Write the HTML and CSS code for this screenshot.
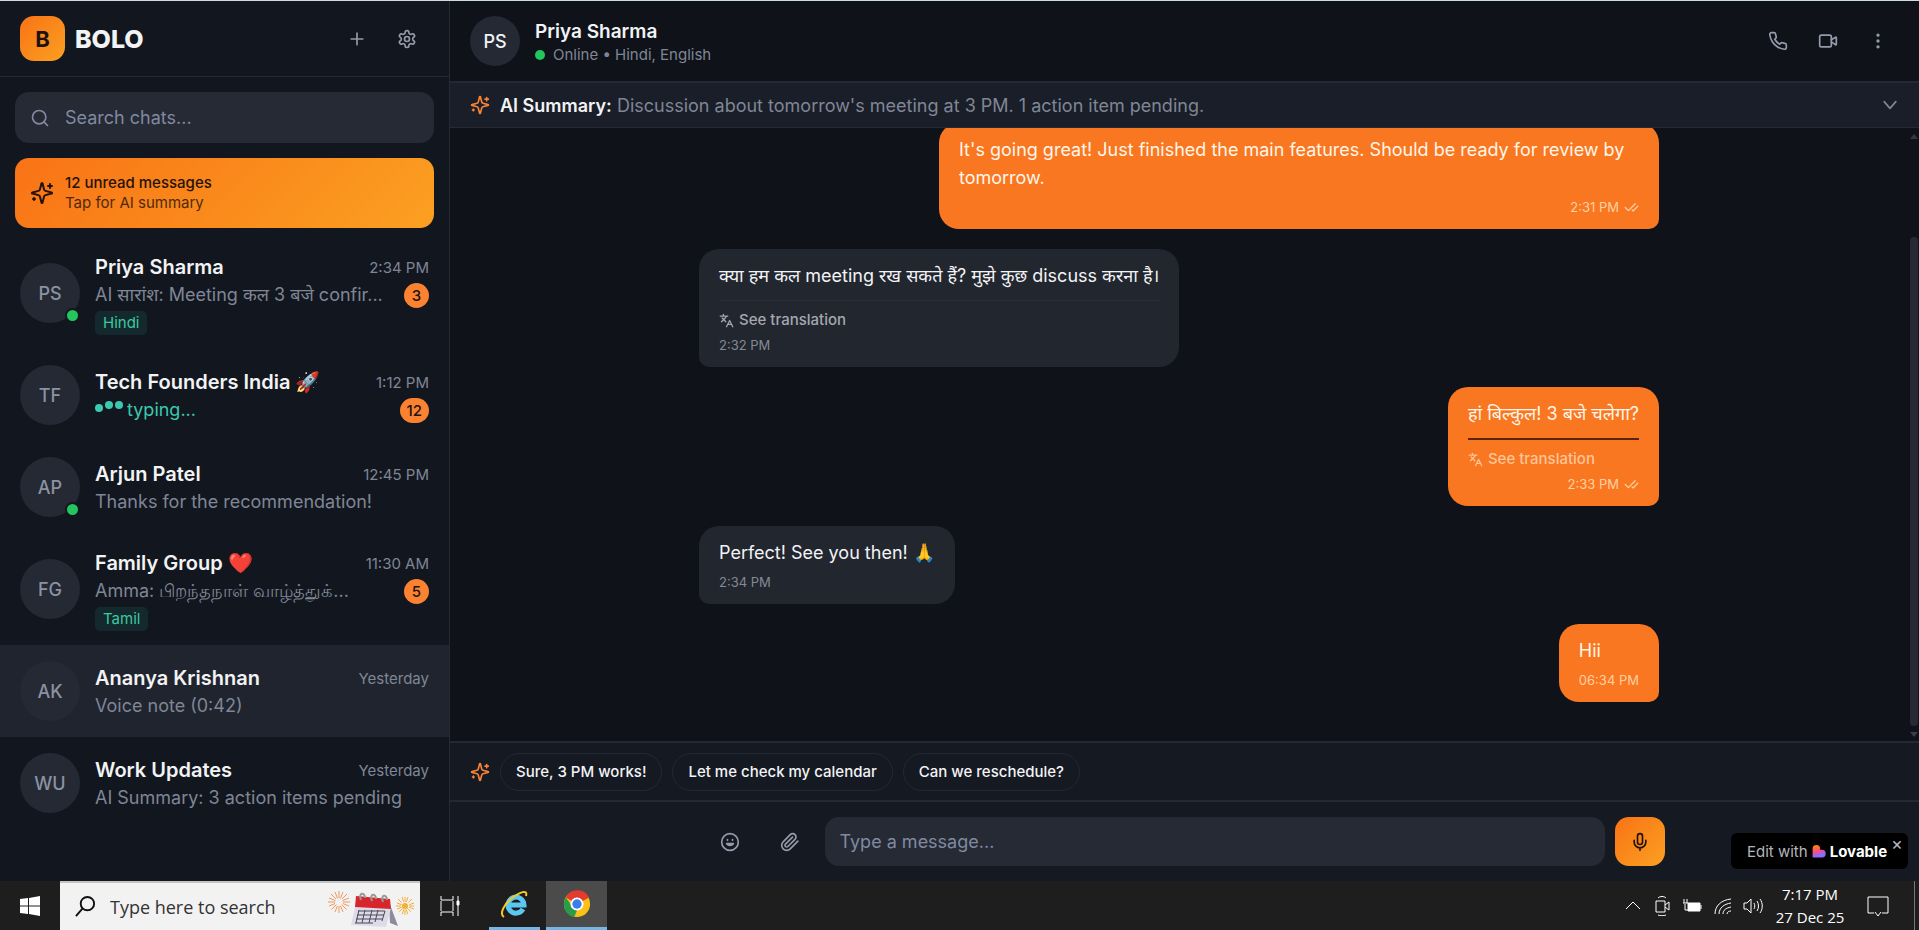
FILE: index.html
```html
<!DOCTYPE html>
<html lang="en">

<head>
    <meta charset="utf-8">
    <title>BOLO</title>
    <link rel="stylesheet" href="styles.css">
</head>

<body>
    <!-- shared icons -->
    <svg class="sprite" aria-hidden="true">
        <symbol id="sparkles" viewBox="0 0 24 24">
            <path d="M9.9 15.5A2 2 0 0 0 8.500 14.100l-6.100-1.600a.5.5 0 0 1 0-1L8.500 9.900A2 2 0 0 0 9.900 8.500l1.600-6.100a.5.5 0 0 1 1 0L14.100 8.500A2 2 0 0 0 15.500 9.900l6.100 1.600a.5.5 0 0 1 0 1L15.500 14.100a2 2 0 0 0-1.400 1.400l-1.600 6.100a.5.5 0 0 1-1 0z" />
            <path d="M20 3v4M22 5h-4M4 17v2M5 18H3" />
        </symbol>
        <symbol id="translate" viewBox="0 0 24 24">
            <path d="M2 5h12M7 2v3M4 14l6-6 2-3M5 8l6 6M22 22l-5-10-5 10M14 18h6" />
        </symbol>
        <symbol id="checks" viewBox="0 0 24 24">
            <path d="M18 6 7 17l-5-5M22 10l-7.500 7.500L13 16" />
        </symbol>
    </svg>

    <div class="app">
        <aside class="sidebar">
            <header class="brand">
                <div class="logo">B</div>
                <h1>BOLO</h1>
                <button class="icon-btn" aria-label="New chat"><svg class="icon" viewBox="0 0 24 24"><path d="M5 12h14M12 5v14" /></svg></button>
                <button class="icon-btn" aria-label="Settings"><svg class="icon" viewBox="0 0 24 24"><path d="M12.220 2h-.44a2 2 0 0 0-2 2v.18a2 2 0 0 1-1 1.730l-.43.25a2 2 0 0 1-2 0l-.15-.08a2 2 0 0 0-2.730.73l-.22.38a2 2 0 0 0 .73 2.730l.15.1a2 2 0 0 1 1 1.720v.51a2 2 0 0 1-1 1.740l-.15.09a2 2 0 0 0-.73 2.730l.22.38a2 2 0 0 0 2.730.73l.15-.08a2 2 0 0 1 2 0l.43.25a2 2 0 0 1 1 1.730V20a2 2 0 0 0 2 2h.44a2 2 0 0 0 2-2v-.18a2 2 0 0 1 1-1.730l.43-.25a2 2 0 0 1 2 0l.15.08a2 2 0 0 0 2.730-.73l.22-.39a2 2 0 0 0-.73-2.730l-.15-.08a2 2 0 0 1-1-1.740v-.5a2 2 0 0 1 1-1.740l.15-.09a2 2 0 0 0 .73-2.730l-.22-.38a2 2 0 0 0-2.730-.73l-.15.08a2 2 0 0 1-2 0l-.43-.25a2 2 0 0 1-1-1.730V4a2 2 0 0 0-2-2z" /><circle cx="12" cy="12" r="3" /></svg></button>
            </header>

            <label class="search">
                <svg class="icon" viewBox="0 0 24 24"><circle cx="11" cy="11" r="8" /><path d="m21 21-4.300-4.300" /></svg>
                <input type="search" placeholder="Search chats..." aria-label="Search chats">
            </label>

            <button class="unread">
                <svg class="icon"><use href="#sparkles" /></svg>
                <span><strong>12 unread messages</strong><small>Tap for AI summary</small></span>
            </button>

            <ul class="chats">
                <li class="chat">
                    <div class="avatar online">PS</div>
                    <div class="info">
                        <div class="row"><span class="name">Priya Sharma</span><time>2:34 PM</time></div>
                        <div class="row"><span class="preview">AI सारांश: Meeting कल 3 बजे confir...</span><span class="count">3</span></div>
                        <span class="tag">Hindi</span>
                    </div>
                </li>
                <li class="chat">
                    <div class="avatar">TF</div>
                    <div class="info">
                        <div class="row"><span class="name">Tech Founders India 🚀</span><time>1:12 PM</time></div>
                        <div class="row"><span class="preview typing"><span class="dots"><i></i><i></i><i></i></span>typing...</span><span class="count">12</span></div>
                    </div>
                </li>
                <li class="chat">
                    <div class="avatar online">AP</div>
                    <div class="info">
                        <div class="row"><span class="name">Arjun Patel</span><time>12:45 PM</time></div>
                        <div class="row"><span class="preview">Thanks for the recommendation!</span></div>
                    </div>
                </li>
                <li class="chat">
                    <div class="avatar">FG</div>
                    <div class="info">
                        <div class="row"><span class="name">Family Group ❤️</span><time>11:30 AM</time></div>
                        <div class="row"><span class="preview">Amma: பிறந்தநாள் வாழ்த்துக்...</span><span class="count">5</span></div>
                        <span class="tag">Tamil</span>
                    </div>
                </li>
                <li class="chat active">
                    <div class="avatar">AK</div>
                    <div class="info">
                        <div class="row"><span class="name">Ananya Krishnan</span><time>Yesterday</time></div>
                        <div class="row"><span class="preview">Voice note (0:42)</span></div>
                    </div>
                </li>
                <li class="chat">
                    <div class="avatar">WU</div>
                    <div class="info">
                        <div class="row"><span class="name">Work Updates</span><time>Yesterday</time></div>
                        <div class="row"><span class="preview">AI Summary: 3 action items pending</span></div>
                    </div>
                </li>
            </ul>
        </aside>

        <main class="conversation">
            <header class="chat-header">
                <div class="avatar small">PS</div>
                <div class="who">
                    <h2>Priya Sharma</h2>
                    <p><i class="status"></i>Online • Hindi, English</p>
                </div>
                <button class="icon-btn" aria-label="Call"><svg class="icon" viewBox="0 0 24 24"><path d="M22 16.920v3a2 2 0 0 1-2.180 2 19.790 19.790 0 0 1-8.630-3.070 19.500 19.500 0 0 1-6-6 19.790 19.790 0 0 1-3.070-8.670A2 2 0 0 1 4.110 2h3a2 2 0 0 1 2 1.720 12.840 12.840 0 0 0 .7 2.810 2 2 0 0 1-.45 2.110L8.090 9.910a16 16 0 0 0 6 6l1.270-1.270a2 2 0 0 1 2.110-.45 12.840 12.840 0 0 0 2.810.7A2 2 0 0 1 22 16.920z" /></svg></button>
                <button class="icon-btn" aria-label="Video call"><svg class="icon" viewBox="0 0 24 24"><rect x="2" y="5" width="14" height="14" rx="2" /><path d="m16 13 5.220 3.480a.5.5 0 0 0 .78-.42V7.870a.5.5 0 0 0-.75-.43L16 10.500" /></svg></button>
                <button class="icon-btn" aria-label="More"><svg class="icon" viewBox="0 0 24 24"><circle cx="12" cy="5" r="1" /><circle cx="12" cy="12" r="1" /><circle cx="12" cy="19" r="1" /></svg></button>
            </header>

            <section class="summary">
                <svg class="icon orange"><use href="#sparkles" /></svg>
                <p><strong>AI Summary:</strong> Discussion about tomorrow's meeting at 3 PM. 1 action item pending.</p>
                <svg class="icon" viewBox="0 0 24 24"><path d="m5 8 7 8 7-8" /></svg>
            </section>

            <section class="messages">
                <div class="thread">
                    <article class="bubble sent">
                        <p>It's going great! Just finished the main features. Should be ready for review by tomorrow.</p>
                        <footer>2:31 PM <svg class="icon"><use href="#checks" /></svg></footer>
                    </article>
                    <article class="bubble">
                        <p>क्या हम कल meeting रख सकते हैं? मुझे कुछ discuss करना है।</p>
                        <button class="translate"><svg class="icon"><use href="#translate" /></svg>See translation</button>
                        <footer>2:32 PM</footer>
                    </article>
                    <article class="bubble sent">
                        <p>हां बिल्कुल! 3 बजे चलेगा?</p>
                        <button class="translate"><svg class="icon"><use href="#translate" /></svg>See translation</button>
                        <footer>2:33 PM <svg class="icon"><use href="#checks" /></svg></footer>
                    </article>
                    <article class="bubble">
                        <p>Perfect! See you then! 🙏</p>
                        <footer>2:34 PM</footer>
                    </article>
                    <article class="bubble sent">
                        <p>Hii</p>
                        <footer>06:34 PM</footer>
                    </article>
                </div>
                <div class="scrollbar"><b class="up"></b><span></span><b class="down"></b></div>
            </section>

            <section class="replies">
                <svg class="icon orange"><use href="#sparkles" /></svg>
                <button>Sure, 3 PM works!</button>
                <button>Let me check my calendar</button>
                <button>Can we reschedule?</button>
            </section>

            <form class="composer">
                <button type="button" class="icon-btn" aria-label="Emoji"><svg class="icon" viewBox="0 0 24 24"><circle cx="12" cy="12" r="10" /><path d="M8 14s1.500 2 4 2 4-2 4-2zM9 9v1M15 9v1" /></svg></button>
                <button type="button" class="icon-btn" aria-label="Attach"><svg class="icon" viewBox="0 0 24 24"><path d="m21.440 11.050-9.190 9.190a6 6 0 0 1-8.490-8.490l8.570-8.570A4 4 0 1 1 18 8.840l-8.590 8.570a2 2 0 0 1-2.830-2.830l8.490-8.480" /></svg></button>
                <input type="text" placeholder="Type a message..." aria-label="Message">
                <button type="button" class="mic" aria-label="Record"><svg class="icon" viewBox="0 0 24 24"><path d="M12 2a3 3 0 0 0-3 3v7a3 3 0 0 0 6 0V5a3 3 0 0 0-3-3zM19 10v2a7 7 0 0 1-14 0v-2M12 19v3" /></svg></button>
            </form>
        </main>

        <div class="lovable">
            <span>Edit with</span>
            <svg viewBox="0 0 24 24">
                <defs>
                    <linearGradient id="heart" x1="0" y1="0" x2=".3" y2="1">
                        <stop offset=".2" stop-color="#ff7a1a" />
                        <stop offset=".55" stop-color="#ff4d7d" />
                        <stop offset=".9" stop-color="#8a6cff" />
                    </linearGradient>
                </defs>
                <path fill="url(#heart)" d="M1 8a6.500 6.500 0 0 1 13 0v2h3a6.500 6.500 0 0 1 0 13H1z" />
            </svg>
            <strong>Lovable</strong>
            <button aria-label="Close">×</button>
        </div>
    </div>

    <footer class="taskbar">
        <button class="start" aria-label="Start"><svg viewBox="0 0 20 20"><path d="M0 3l8-1v7.500H0zM9 2l11-2v9.500H9zM0 10.500h8V18l-8-1zM9 10.500h11V20L9 18z" /></svg></button>
        <label class="win-search">
            <svg class="glass" viewBox="0 0 22 22"><circle cx="13" cy="8" r="7" /><path d="M8 13l-7 8" /></svg>
            <input type="search" placeholder="Type here to search" aria-label="Type here to search">
            <svg class="festive" viewBox="0 0 88 44">
                <!-- fireworks -->
                <g stroke="#f09a5a" fill="none">
                    <path stroke-dasharray="7 8" d="M11 6v22M0 17h22M3 9l16 16M19 9L3 25M7 7l8 20M15 7L7 27M1 13l20 8M21 13L1 21" />
                    <path stroke="#f5ae3c" stroke-dasharray="5 8" d="M77 12v18M68 21h18M70 14l14 14M84 14L70 28M74 12l6 18M80 12l-6 18M69 18l17 6M86 18l-17 6" />
                </g>
                <circle cx="77" cy="21" r="3" fill="#f3b12e" />
                <!-- desk calendar -->
                <path fill="#8d8b9c" d="M61 17l9 24-8-3z" />
                <path fill="#dddbe8" d="M27 22l36 1-5 19-35-2z" />
                <path fill="#d7262b" d="M28 11l34 3 1 10-36-2z" />
                <path stroke="#4a4858" fill="none" d="M30 26h27M29 30h27M28 34h26M27 38h18M31 25l-3 13M37 25l-3 13M44 25l-3 13M50 25l-3 12M57 26l-3 10" />
                <path stroke="#999" stroke-width="2" fill="none" d="M33 15c-3-8 4-8 4-2M44 16c-3-8 4-8 4-2M55 17c-3-8 4-8 4-2" />
            </svg>
        </label>
        <button class="task" aria-label="Task view"><svg class="line" viewBox="0 0 20 20"><path d="M1 0v4h12V0M1 20v-4h12v4M1 5v10M13 5v10M18 0v20" /><path fill="#fff" d="M17 5h2v4h-2z" /></svg></button>
        <button class="app-btn" aria-label="Internet Explorer">
            <svg viewBox="0 0 30 28"><path fill="none" stroke="#5cc8f2" stroke-width="5" d="M23 19a8 8 0 1 1 1-4H9" /><path fill="none" stroke="#f7c928" stroke-width="2" d="M4 27c-5-3 0-13 8-19S28-1 26 6" /></svg>
        </button>
        <button class="app-btn current" aria-label="Chrome">
            <svg viewBox="0 0 30 30"><circle cx="15" cy="15" r="14" fill="#fbc116" /><path fill="#e33b2e" d="M15 15L3 8a14 14 0 0 1 25 0z" /><path fill="#2a9b48" d="M3 8l8 11 4 3-3 7A14 14 0 0 1 3 8z" /><circle cx="15" cy="15" r="7" fill="#fff" /><circle cx="15" cy="15" r="5" fill="#3b7ded" /></svg>
        </button>
        <div class="tray">
            <svg class="line" viewBox="0 0 20 20"><path d="M3 13l7-7 7 7" /></svg>
            <svg class="line" viewBox="0 0 20 20"><path d="M3 5h9v11H3zM12 9l4-3v8l-4-3M5 2c2-2 6-2 8 0M5 19c2 1 6 1 8 0" /></svg>
            <svg class="line" viewBox="0 0 20 20"><path d="M1 3v4M4 3v4M0 7h5M2 8v6h3" /><path fill="#fff" d="M5 7h12v8H5zM18 9v4" /></svg>
            <svg class="line" viewBox="0 0 20 20"><path d="M2 18C2 10 8 4 18 3M6 18c0-6 5-10 12-11M10 18c0-4 3-6 8-7M14 18c0-2 2-3 4-3" /></svg>
            <svg class="line" viewBox="0 0 20 20"><path d="M1 7h3l4-4v14l-4-4H1zM11 7c1 2 1 4 0 6M14 5c2 3 2 7 0 10M17 3c3 4 3 10 0 14" /></svg>
            <div class="clock"><span>7:17 PM</span><span>27 Dec 25</span></div>
            <svg class="line note" viewBox="0 0 22 22"><path d="M7 18H1V2h20v16h-6M8 17l3 4 3-4" /></svg>
        </div>
    </footer>
</body>

</html>
```
FILE: styles.css
```css
*,
*::after {
    box-sizing: border-box;
}

body {
    margin: 0;
    height: 100vh;
    display: flex;
    flex-direction: column;
    border-top: 1px solid #cfdcdc;
    background: #0f1219;
    color: #f2f3f5;
    font-family: Inter, "Noto Sans Devanagari", "Noto Sans", sans-serif;
    font-size: 18px;
}

h1,
h2,
p,
ul {
    margin: 0;
    padding: 0;
}

button,
input {
    border: 0;
    padding: 0;
    background: none;
    color: inherit;
    font: inherit;
}

input {
    flex: 1;
    min-width: 0;
    outline: none;
}

input::placeholder {
    color: #8189a0;
    opacity: 1;
}

.sprite {
    display: none;
}

.icon {
    width: 20px;
    height: 20px;
    flex: none;
    fill: none;
    stroke: currentColor;
    stroke-width: 2;
    stroke-linecap: round;
    stroke-linejoin: round;
}

.orange {
    color: #f58236;
}

.app {
    position: relative;
    flex: 1;
    min-height: 0;
    display: flex;
}

/* Sidebar */
.sidebar {
    width: 450px;
    flex: none;
    background: #12161e;
    border-right: 1px solid #262a33;
}

.brand {
    display: flex;
    align-items: center;
    height: 76px;
    padding: 0 20px;
    gap: 5px;
    border-bottom: 1px solid #262a33;
}

.brand h1 {
    flex: 1;
    margin-left: 5px;
    font-size: 25px;
    font-weight: 800;
}

.logo {
    display: grid;
    place-items: center;
    width: 45px;
    height: 45px;
    border-radius: 14px;
    background: linear-gradient(135deg, #f97316, #fba021);
    color: #1d120c;
    font-size: 22px;
    font-weight: 700;
}

.icon-btn {
    display: grid;
    place-items: center;
    width: 45px;
    height: 45px;
    color: #959bab;
}

.search {
    display: flex;
    align-items: center;
    gap: 15px;
    height: 51px;
    margin: 15px;
    padding: 0 15px;
    border-radius: 14px;
    background: #252a35;
    color: #8189a0;
}

.unread {
    display: flex;
    align-items: center;
    gap: 11px;
    width: 419px;
    height: 70px;
    margin: 0 15px 9px;
    padding: 0 15px;
    border-radius: 14px;
    background: linear-gradient(135deg, #f97316, #fba021);
    color: #24130a;
    line-height: 20px;
    text-align: left;
}

.unread .icon {
    width: 24px;
    height: 24px;
}

.unread strong,
.unread small {
    display: block;
    font-size: 15px;
    font-weight: 500;
}

.unread small {
    font-weight: 400;
    opacity: .8;
}

.chats {
    list-style: none;
}

.chat {
    display: flex;
    align-items: center;
    gap: 15px;
    min-height: 92px;
    padding: 14px 20px;
}

.chat.active {
    background: #20242e;
}

.avatar {
    position: relative;
    display: grid;
    place-items: center;
    width: 60px;
    height: 60px;
    flex: none;
    border-radius: 50%;
    background: #242934;
    color: #8b92a2;
    font-weight: 500;
}

.avatar.small {
    width: 50px;
    height: 50px;
    color: #f2f3f5;
}

.online::after {
    content: "";
    position: absolute;
    right: 0;
    bottom: 0;
    width: 15px;
    height: 15px;
    border: 2px solid #12161e;
    border-radius: 50%;
    background: #22c55e;
}

.info {
    flex: 1;
    min-width: 0;
    padding-top: 2px;
}

.row {
    display: flex;
    align-items: center;
    justify-content: space-between;
    height: 28px;
}

.name {
    font-size: 20px;
    font-weight: 600;
}

.row time {
    color: #7f8696;
    font-size: 15px;
}

.preview {
    overflow: hidden;
    color: #7f8696;
    line-height: 28px;
    text-overflow: ellipsis;
    white-space: nowrap;
}

.typing {
    color: #3cc9b0;
}

.dots {
    display: inline-flex;
    gap: 2px;
    margin-right: 4px;
    vertical-align: 4px;
}

.dots i {
    width: 8px;
    height: 8px;
    border-radius: 50%;
    background: #3cc9b0;
}

.dots i:first-child {
    margin-top: 3px;
}

.count {
    min-width: 25px;
    height: 25px;
    padding: 0 7px;
    border-radius: 13px;
    background: #fa8231;
    color: #1d120c;
    font-size: 15px;
    font-weight: 500;
    line-height: 25px;
    text-align: center;
}

.tag {
    display: block;
    width: fit-content;
    margin-top: 2px;
    padding: 0 8px;
    border-radius: 5px;
    background: #14292e;
    color: #3cc9a0;
    font-size: 15px;
    line-height: 24px;
}

/* Conversation */
.conversation {
    flex: 1;
    min-width: 0;
    display: flex;
    flex-direction: column;
}

.chat-header {
    display: flex;
    align-items: center;
    gap: 5px;
    height: 82px;
    padding: 0 19px 0 20px;
    border-bottom: 2px solid #242832;
}

.who {
    flex: 1;
    margin-left: 10px;
    padding-top: 3px;
}

.who h2 {
    font-size: 19px;
    font-weight: 600;
    line-height: 25px;
}

.who p {
    color: #7f8696;
    font-size: 15px;
    line-height: 22px;
}

.status {
    display: inline-block;
    width: 10px;
    height: 10px;
    margin-right: 8px;
    border-radius: 50%;
    background: #22c55e;
}

.summary {
    display: flex;
    align-items: center;
    gap: 10px;
    height: 45px;
    padding: 0 19px 0 20px;
    border-bottom: 1px solid #262a33;
    background: #1a1e28;
    color: #7f8696;
}

.summary p {
    flex: 1;
}

.summary strong {
    color: #f2f3f5;
    font-weight: 600;
}

.messages {
    flex: 1;
    min-height: 0;
    display: flex;
    overflow: hidden;
}

.thread {
    flex: 1;
    max-width: 960px;
    margin: 0 auto;
    padding-bottom: 39px;
    display: flex;
    flex-direction: column;
    align-items: flex-start;
    justify-content: flex-end;
    gap: 20px;
}

.bubble {
    max-width: 75%;
    padding: 13px 20px 12px;
    border-radius: 20px 20px 20px 10px;
    background: #22262f;
    line-height: 28px;
}

.sent {
    align-self: flex-end;
    border-radius: 20px 20px 10px 20px;
    background: #f97720;
    color: #fff6ea;
}

.bubble footer {
    display: flex;
    align-items: center;
    gap: 5px;
    margin-top: 5px;
    color: #858993;
    font-size: 13px;
    line-height: 20px;
}

.sent footer {
    justify-content: flex-end;
    color: #ffd0a4;
}

.bubble .icon {
    width: 15px;
    height: 15px;
}

.translate {
    display: flex;
    align-items: center;
    gap: 5px;
    width: 100%;
    margin-top: 10px;
    padding-top: 9px;
    border-top: 1px solid #292e39;
    color: #a5a8af;
    font-size: 15px;
    font-weight: 500;
    line-height: 20px;
}

.sent .translate {
    border-top: 2px solid #5a2410;
    color: #ffc598;
}

.scrollbar {
    width: 11px;
    display: flex;
    flex-direction: column;
    align-items: center;
    padding: 6px 0 4px;
}

.scrollbar span {
    flex: 1;
    width: 8px;
    margin: 98px 0 6px;
    border-radius: 4px;
    background: #252a35;
}

.scrollbar b {
    border: 0 solid transparent;
    border-width: 0 4px;
}

.scrollbar .up {
    border-bottom: 5px solid #333740;
}

.scrollbar .down {
    border-top: 5px solid #3a3e48;
}

.replies {
    display: flex;
    align-items: center;
    gap: 10px;
    height: 59px;
    padding: 0 20px;
    border-top: 2px solid #242832;
    background: #151922;
}

.replies button {
    height: 38px;
    padding: 0 15px;
    border: 1px solid #242832;
    border-radius: 19px;
    font-size: 15px;
    font-weight: 500;
}

.composer {
    display: flex;
    align-items: center;
    justify-content: center;
    gap: 10px;
    height: 81px;
    padding: 0 max(20px, calc((100% - 960px) / 2));
    border-top: 2px solid #242832;
    background: #151922;
}

.composer .icon-btn,
.mic {
    display: grid;
    place-items: center;
    width: 50px;
    height: 49px;
}

.composer input {
    height: 49px;
    padding: 0 15px;
    border-radius: 14px;
    background: #252a35;
}

.mic {
    border-radius: 14px;
    background: linear-gradient(135deg, #f97316, #fba021);
    color: #24130a;
}

.lovable {
    position: absolute;
    right: 11px;
    bottom: 12px;
    display: flex;
    align-items: center;
    gap: 4px;
    height: 36px;
    padding: 0 5px 0 16px;
    border-radius: 6px;
    background: #000;
    color: #b4b6ba;
    font-size: 15px;
}

.lovable svg {
    width: 14px;
    height: 14px;
}

.lovable strong {
    color: #fff;
}

.lovable button {
    align-self: flex-start;
    font-size: 18px;
}

/* Windows taskbar */
.taskbar {
    display: flex;
    height: 49px;
    flex: none;
    background: #1e1e1e;
    font-family: "Open Sans", sans-serif;
    color: #fff;
}

.start,
.task {
    display: grid;
    place-items: center;
    width: 60px;
}

.start svg {
    width: 20px;
    height: 20px;
    fill: #fff;
}

.line {
    width: 20px;
    height: 20px;
    fill: none;
    stroke: #fff;
}

.win-search {
    display: flex;
    align-items: center;
    gap: 14px;
    width: 360px;
    padding: 0 4px 0 15px;
    border-top: 2px solid #c4c4c4;
    background: #f2f2f2;
}

.win-search input::placeholder {
    color: #333;
}

.glass {
    width: 21px;
    height: 21px;
    fill: none;
    stroke: #111;
    stroke-width: 2;
}

.festive {
    width: 88px;
    height: 44px;
}

.app-btn {
    display: grid;
    place-items: center;
    width: 51px;
    margin: 0 6px 0 9px;
    border-bottom: 3px solid #76b5e4;
}

.app-btn.current {
    width: 61px;
    margin: 0;
    background: #4b4b4b;
}

.app-btn svg {
    width: 30px;
    height: 28px;
}

.tray {
    display: flex;
    align-items: center;
    gap: 10px;
    margin-left: auto;
    margin-right: 4px;
    padding-right: 25px;
    border-right: 1px solid #777;
}

.clock {
    width: 74px;
    margin-right: 10px;
    font-size: 15px;
    line-height: 23px;
    text-align: center;
}

.clock span {
    display: block;
    white-space: nowrap;
}

.note {
    width: 22px;
    height: 22px;
}
```
